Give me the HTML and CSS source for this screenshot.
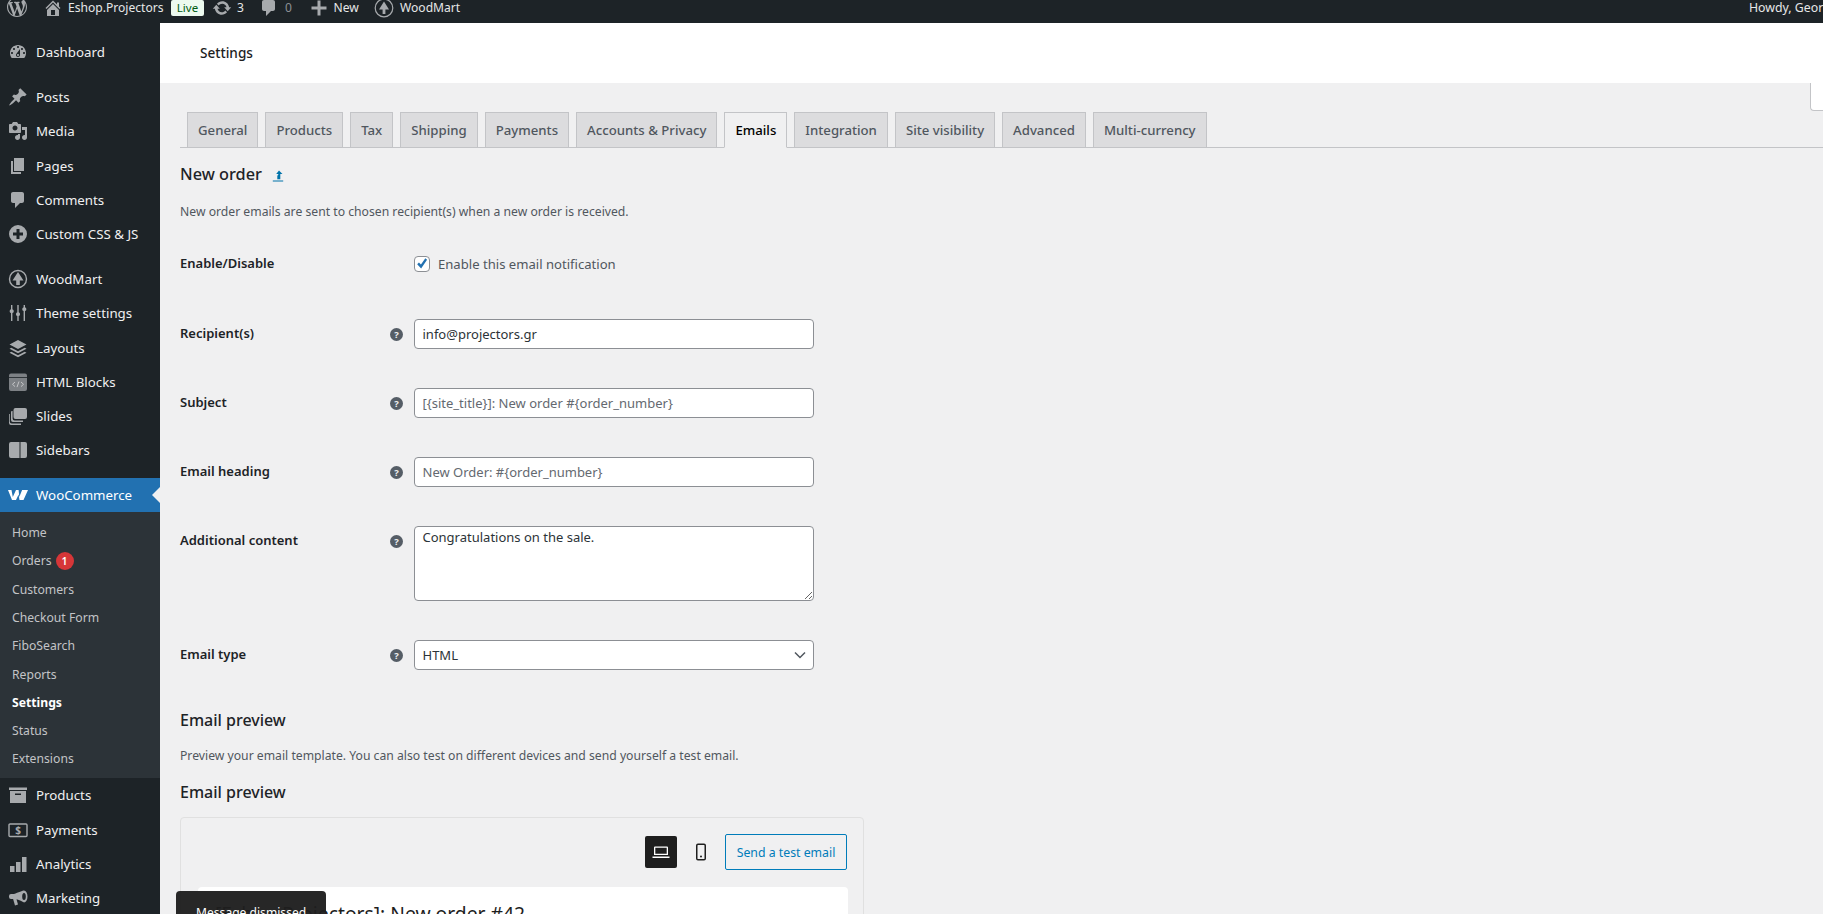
FILE: index.html
```html
<!DOCTYPE html>
<html lang="en">
<head>
<meta charset="utf-8">
<title>Settings</title>
<link rel="stylesheet" href="styles.css">
</head>
<body>
<header class="adminbar">
  <svg class="ab-logo" viewBox="0 0 20 20"><path d="M20 10c0-5.51-4.49-10-10-10C4.48 0 0 4.49 0 10c0 5.52 4.48 10 10 10 5.51 0 10-4.48 10-10zM7.78 15.37L4.37 6.22c.55-.02 1.17-.08 1.17-.08.5-.06.44-1.13-.06-1.11 0 0-1.45.11-2.37.11-.18 0-.37 0-.58-.01C4.12 2.69 6.87 1.11 10 1.11c2.33 0 4.45.87 6.05 2.34-.68-.11-1.65.39-1.65 1.58 0 .74.45 1.36.9 2.1.35.61.55 1.36.55 2.46 0 1.49-1.4 5-1.4 5l-3.03-8.37c.54-.02.82-.17.82-.17.5-.05.44-1.25-.06-1.22 0 0-1.44.12-2.38.12-.87 0-2.33-.12-2.33-.12-.5-.03-.56 1.2-.06 1.22l.92.08 1.26 3.41zM17.41 10c.24-.64.74-1.87.43-4.25.7 1.29 1.05 2.71 1.05 4.25 0 3.29-1.73 6.24-4.4 7.78.97-2.59 1.94-5.2 2.92-7.78zM6.1 18.09C3.12 16.65 1.11 13.53 1.11 10c0-1.3.23-2.48.72-3.59C3.25 10.3 4.67 14.2 6.1 18.09zm4.03-6.63l2.58 6.98c-.86.29-1.76.45-2.71.45-.79 0-1.57-.11-2.29-.33.81-2.38 1.62-4.74 2.42-7.1z"/></svg>
  <svg class="ab-home" viewBox="0 0 20 20"><path d="M16 8.5l1.53 1.53-1.06 1.06L10 4.62l-6.47 6.47-1.06-1.06L10 2.5l4 4v-2h2v4zm-6-2.46l6 5.99V18H4v-5.97zM12 17v-5H8v5h4z"/></svg>
  <span class="ab-text ab-site">Eshop.Projectors</span>
  <span class="ab-live">Live</span>
  <svg class="ab-update" viewBox="0 0 20 20"><path d="M10.2 3.28c3.53 0 6.43 2.61 6.92 6h2.08l-3.5 4-3.5-4h2.32c-.45-1.97-2.21-3.45-4.32-3.45-1.45 0-2.73.71-3.54 1.78L4.95 5.66C6.23 4.2 8.11 3.28 10.2 3.28zm-.4 13.44c-3.52 0-6.43-2.61-6.92-6H.8l3.5-4c1.17 1.33 2.33 2.67 3.5 4H5.48c.45 1.97 2.21 3.45 4.32 3.45 1.45 0 2.73-.71 3.54-1.78l1.71 1.95c-1.28 1.46-3.15 2.38-5.25 2.38z"/></svg>
  <span class="ab-text ab-count">3</span>
  <svg class="ab-comment" viewBox="0 0 20 20"><path d="M5 2h9c1.1 0 2 .9 2 2v7c0 1.1-.9 2-2 2h-2l-5 5v-5H5c-1.1 0-2-.9-2-2V4c0-1.1.9-2 2-2z"/></svg>
  <span class="ab-text ab-zero">0</span>
  <svg class="ab-plus" viewBox="0 0 20 20"><path d="M8.5 2.5h3v6h6v3h-6v6h-3v-6h-6v-3h6z"/></svg>
  <span class="ab-text ab-new">New</span>
  <svg class="ab-wood" viewBox="0 0 20 20"><circle class="ring" cx="10" cy="10" r="8.8"/><path d="M10 3.5l5 8h-3.6V16H8.6V11.5H5z"/></svg>
  <span class="ab-text">WoodMart</span>
  <span class="ab-text ab-howdy">Howdy, George</span>
</header>

<div class="shell">
  <nav class="sidebar">
    <a class="item"><svg class="ico" viewBox="0 0 20 20"><path d="M3.76 16h12.48c1.1-1.37 1.76-3.11 1.76-5 0-4.42-3.58-8-8-8s-8 3.58-8 8c0 1.89.66 3.63 1.76 5zM10 4c.55 0 1 .45 1 1s-.45 1-1 1-1-.45-1-1 .45-1 1-1zM6 6c.55 0 1 .45 1 1s-.45 1-1 1-1-.45-1-1 .45-1 1-1zm8 0c.55 0 1 .45 1 1s-.45 1-1 1-1-.45-1-1 .45-1 1-1zm-5.37 5.55L12 7v6c0 1.1-.9 2-2 2s-2-.9-2-2c0-.57.24-1.08.63-1.45zM4 10c.55 0 1 .45 1 1s-.45 1-1 1-1-.45-1-1 .45-1 1-1zm12 0c.55 0 1 .45 1 1s-.45 1-1 1-1-.45-1-1 .45-1 1-1zm-5 3c0-.55-.45-1-1-1s-1 .45-1 1 .45 1 1 1 1-.45 1-1z"/></svg>Dashboard</a>
    <div class="sep"></div>
    <a class="item"><svg class="ico" viewBox="0 0 20 20"><path d="M10.44 3.02l1.82-1.82 6.36 6.35-1.83 1.82c-1.05-.68-2.48-.57-3.41.36l-.75.75c-.92.93-1.04 2.35-.35 3.41l-1.83 1.82-2.41-2.41-2.8 2.79c-.42.42-3.38 2.71-3.8 2.29s1.86-3.39 2.28-3.81l2.79-2.79L4.1 9.36l1.83-1.82c1.05.69 2.48.57 3.4-.36l.75-.75c.93-.92 1.05-2.35.36-3.41z"/></svg>Posts</a>
    <a class="item"><svg class="ico" viewBox="0 0 20 20"><path d="M13 11V4c0-.55-.45-1-1-1h-1.67L9 1H5L3.67 3H2c-.55 0-1 .45-1 1v7c0 .55.45 1 1 1h10c.55 0 1-.45 1-1zM7 4.5c1.38 0 2.5 1.12 2.5 2.5S8.38 9.5 7 9.5 4.5 8.38 4.5 7 5.62 4.5 7 4.5zM14 6h5v10.5c0 1.38-1.12 2.5-2.5 2.5S14 17.88 14 16.5s1.12-2.5 2.5-2.5c.17 0 .34.02.5.05V9h-3V6zm-4 8.05V13h2v3.5c0 1.38-1.12 2.5-2.5 2.5S7 17.88 7 16.5 8.12 14 9.5 14c.17 0 .34.02.5.05z"/></svg>Media</a>
    <a class="item"><svg class="ico" viewBox="0 0 20 20"><path d="M6 15V2h10v13H6zm-1 1h8v2H3V5h2v11z"/></svg>Pages</a>
    <a class="item"><svg class="ico" viewBox="0 0 20 20"><path d="M5 2h9c1.1 0 2 .9 2 2v7c0 1.1-.9 2-2 2h-2l-5 5v-5H5c-1.1 0-2-.9-2-2V4c0-1.1.9-2 2-2z"/></svg>Comments</a>
    <a class="item"><svg class="ico" viewBox="0 0 20 20"><path fill-rule="evenodd" d="M10 1a9 9 0 1 1 0 18 9 9 0 0 1 0-18zM8.5 5v3.5H5v3h3.500V15h3v-3.5H15v-3h-3.500V5z"/></svg>Custom CSS &amp; JS</a>
    <div class="sep"></div>
    <a class="item"><svg class="ico" viewBox="0 0 20 20"><circle class="ring" cx="10" cy="10" r="8.5"/><path d="M10 3l5.500 8.500h-3.700V16H8.200V11.500H4.500z"/></svg>WoodMart</a>
    <a class="item"><svg class="ico" viewBox="0 0 20 20"><path d="M3 2h1.400v4.300a2 2 0 0 1 0 3.800V18H3V10.100a2 2 0 0 1 0-3.800zM9.300 2h1.400v7.300a2 2 0 0 1 0 3.800V18H9.300v-4.900a2 2 0 0 1 0-3.800zM15.600 2H17v2.300a2 2 0 0 1 0 3.800V18h-1.400V8.100a2 2 0 0 1 0-3.800z"/></svg>Theme settings</a>
    <a class="item"><svg class="ico" viewBox="0 0 20 20"><path d="M10 2l8.500 4.500L10 11 1.500 6.500zM3.300 9.700L10 13.200l6.700-3.500 1.800 1L10 15.200 1.500 10.700zM3.300 13.700L10 17.200l6.700-3.500 1.800 1L10 19.200 1.500 14.700z"/></svg>Layouts</a>
    <a class="item"><svg class="ico" viewBox="0 0 20 20"><path class="fade" d="M3 1.500h14a2 2 0 0 1 2 2V17a2 2 0 0 1-2 2H3a2 2 0 0 1-2-2V3.500a2 2 0 0 1 2-2z"/><path class="rule" d="M1 5.500h18"/><path class="code" d="M7 10l-2.500 2.300L7 14.600M13 10l2.500 2.300L13 14.600M11 9.500l-2 5.600"/></svg>HTML Blocks</a>
    <a class="item"><svg class="ico" viewBox="0 0 20 20"><path d="M7.5 2H17a2 2 0 0 1 2 2v7a2 2 0 0 1-2 2H7.500a2 2 0 0 1-2-2V4a2 2 0 0 1 2-2zM4 5h.6v7.500a2 2 0 0 0 2 2H15V16H5a2 2 0 0 1-2-2V6a1 1 0 0 1 1-1zM1 8h.8v7.500a2 2 0 0 0 2 2H13V19H3a2 2 0 0 1-2-2z"/></svg>Slides</a>
    <a class="item"><svg class="ico" viewBox="0 0 20 20"><path d="M3 2h8.500v16H3a2 2 0 0 1-2-2V4a2 2 0 0 1 2-2zM12.500 2H17a2 2 0 0 1 2 2v12a2 2 0 0 1-2 2h-4.500z"/></svg>Sidebars</a>
    <div class="sep"></div>
    <a class="item current"><svg class="ico woo" viewBox="0 0 20 20"><path d="M0 5h3.500l1.300 7L8 5h2.600l.7 7 2.800-7H20l-4.500 10h-4l-.9-5.500L8 15H4z"/></svg>WooCommerce</a>
    <div class="submenu">
      <a class="sub">Home</a>
      <a class="sub orders">Orders <span class="badge">1</span></a>
      <a class="sub">Customers</a>
      <a class="sub">Checkout Form</a>
      <a class="sub">FiboSearch</a>
      <a class="sub">Reports</a>
      <a class="sub active">Settings</a>
      <a class="sub">Status</a>
      <a class="sub">Extensions</a>
    </div>
    <a class="item"><svg class="ico" viewBox="0 0 20 20"><path d="M1 2.500h18V5H1zM2 6h16v12H2zM7 8.500V10h6V8.500z"/></svg>Products</a>
    <a class="item"><svg class="ico" viewBox="0 0 20 20"><rect class="ring" x="1" y="4" width="18" height="12.500" rx="1"/><text class="dollar" x="10" y="14.300" text-anchor="middle">$</text></svg>Payments</a>
    <a class="item"><svg class="ico" viewBox="0 0 20 20"><path d="M2 12h4.500v6H2zM8 8h4.500v10H8zM14 3h4.500v15H14z"/></svg>Analytics</a>
    <a class="item"><svg class="ico" viewBox="0 0 20 20"><path fill-rule="evenodd" d="M16 2.500a3.500 6 0 0 1 0 12c-.6 0-3-2-7.500-3.200l1.500 5.200-3 1-1.900-6.500H3a2 2 0 0 1-2-2v-1a2 2 0 0 1 2-2h3C10 4.500 15 2.500 16 2.500zM16 5a1.800 3.500 0 1 0 0 7 1.800 3.500 0 0 0 0-7z"/></svg>Marketing</a>
  </nav>

  <main class="main">
    <div class="pagehead">Settings</div>
    <div class="activity"></div>
    <div class="content">
      <div class="tabs">
        <a class="tab">General</a>
        <a class="tab">Products</a>
        <a class="tab">Tax</a>
        <a class="tab">Shipping</a>
        <a class="tab">Payments</a>
        <a class="tab">Accounts &amp; Privacy</a>
        <a class="tab on">Emails</a>
        <a class="tab">Integration</a>
        <a class="tab">Site visibility</a>
        <a class="tab">Advanced</a>
        <a class="tab">Multi-currency</a>
      </div>

      <h2 class="title">New order <svg class="uplink" viewBox="0 0 12 12"><path d="M7 .5L10.500 4H8.300v5.300H5.300V6.500c0-1 .4-1.500 1-1.800V4H4.200zM.8 10.500h10.400v1.100H.8z"/></svg></h2>
      <p class="desc desc-first">New order emails are sent to chosen recipient(s) when a new order is received.</p>

      <div class="row row-first">
        <label class="lbl">Enable/Disable</label>
        <span class="nohelp"></span>
        <label class="check"><span class="box"><svg viewBox="0 0 16 16"><path d="M2.500 8.200l2-2 2.300 2.500L11.800 1.500l2 1.500-6.800 10z"/></svg></span>Enable this email notification</label>
      </div>
      <div class="row">
        <label class="lbl">Recipient(s)</label>
        <svg class="help" viewBox="0 0 13 13"><circle cx="6.500" cy="6.500" r="6.500"/><text x="6.500" y="10" text-anchor="middle">?</text></svg>
        <input class="field" type="text" value="info@projectors.gr">
      </div>
      <div class="row">
        <label class="lbl">Subject</label>
        <svg class="help" viewBox="0 0 13 13"><circle cx="6.500" cy="6.500" r="6.500"/><text x="6.500" y="10" text-anchor="middle">?</text></svg>
        <input class="field" type="text" placeholder="[{site_title}]: New order #{order_number}">
      </div>
      <div class="row">
        <label class="lbl">Email heading</label>
        <svg class="help" viewBox="0 0 13 13"><circle cx="6.500" cy="6.500" r="6.500"/><text x="6.500" y="10" text-anchor="middle">?</text></svg>
        <input class="field" type="text" placeholder="New Order: #{order_number}">
      </div>
      <div class="row">
        <label class="lbl">Additional content</label>
        <svg class="help" viewBox="0 0 13 13"><circle cx="6.500" cy="6.500" r="6.500"/><text x="6.500" y="10" text-anchor="middle">?</text></svg>
        <textarea class="field area">Congratulations on the sale.</textarea>
      </div>
      <div class="row">
        <label class="lbl">Email type</label>
        <svg class="help" viewBox="0 0 13 13"><circle cx="6.500" cy="6.500" r="6.500"/><text x="6.500" y="10" text-anchor="middle">?</text></svg>
        <div class="selectwrap">
          <select class="field picker"><option>HTML</option></select>
          <svg class="chev" viewBox="0 0 12 8"><path d="M1 1.500l5 5 5-5"/></svg>
        </div>
      </div>

      <h3 class="sub-h h-first">Email preview</h3>
      <p class="desc desc-two">Preview your email template. You can also test on different devices and send yourself a test email.</p>
      <h3 class="sub-h h-second">Email preview</h3>

      <section class="preview">
        <div class="toolbar">
          <button class="dev dev-on"><svg viewBox="0 0 24 24"><path d="M6 6.500h12a1 1 0 0 1 1 1V15H5V7.500a1 1 0 0 1 1-1zM6.300 7.800v5.900h11.400V7.800zM3.500 16.500h17V18h-17z"/></svg></button>
          <button class="dev"><svg viewBox="0 0 24 24"><path fill-rule="evenodd" d="M9 3.500h6a2 2 0 0 1 2 2v13a2 2 0 0 1-2 2H9a2 2 0 0 1-2-2v-13a2 2 0 0 1 2-2zM9 5a.5.5 0 0 0-.5.5v13a.5.5 0 0 0 .5.5h6a.5.5 0 0 0 .5-.5v-13A.5.5 0 0 0 15 5zM12 15.500a1 1 0 1 1 0 2 1 1 0 0 1 0-2z"/></svg></button>
          <button class="send">Send a test email</button>
        </div>
        <div class="mail">[Eshop.Projectors]: New order #42</div>
      </section>
    </div>
  </main>
</div>

<div class="toast">Message dismissed</div>
</body>
</html>
```

FILE: styles.css
```css
* { box-sizing: border-box; }
html, body { margin: 0; height: 914px; overflow: hidden; }
body {
  background: #f0f0f1;
  color: #3c434a;
  font-family: "Noto Sans", "Open Sans", sans-serif;
  font-size: 13px;
  position: relative;
}
svg { display: block; flex: none; }

/* admin bar */
.adminbar {
  height: 23px;
  background: #1d2327;
  color: #f0f0f1;
  display: flex;
  align-items: flex-start;
  overflow: hidden;
  font-size: 12.100px;
  padding-left: 7px;
}
.adminbar svg { fill: #a7aaad; }
.ab-text { line-height: 15px; height: 16px; white-space: nowrap; color: #e6e7e8; }
.ab-logo { width: 20px; height: 20px; margin-top: -3px; }
.ab-home { width: 20px; height: 20px; margin: -2px 0 0 16px; }
.ab-site { margin-left: 5px; width: 95px; }
.ab-live { width: 33px; height: 16px; line-height: 16px; background: #edfaef; color: #005c12; font-size: 11.500px; text-align: center; margin-left: 8px; border-radius: 2px; }
.ab-update { width: 20px; height: 20px; margin: -2px 0 0 8px; }
.ab-count { margin-left: 5px; width: 7px; }
.ab-comment { width: 20px; height: 20px; margin: -2px 0 0 15px; }
.ab-zero { margin-left: 6px; width: 7px; color: #8c8f94; }
.ab-plus { width: 20px; height: 20px; margin: -2px 0 0 16.500px; }
.ab-new { margin-left: 5px; width: 25.500px; }
.ab-wood { width: 20px; height: 20px; margin: -2px 0 0 15px; }
.ab-wood + .ab-text { margin-left: 6px; }
.ab-wood .ring { fill: none; stroke: #a7aaad; stroke-width: 1.200; }
.ab-howdy { margin-left: auto; width: 74px; overflow: hidden; font-size: 12.300px; }

/* layout */
.shell { display: flex; height: 891px; }
.sidebar {
  width: 160px;
  flex: none;
  background: #1d2327;
  padding-top: 12px;
  overflow: hidden;
  font-size: 13.300px;
}
.sep { height: 11px; }
.sep:nth-of-type(n) { flex: none; }
.item {
  display: flex;
  align-items: center;
  height: 34.200px;
  padding-left: 8px;
  color: #f0f0f1;
  white-space: nowrap;
  position: relative;
}
.ico { width: 20px; height: 20px; margin-right: 8px; fill: #a7aaad; }
.ico .ring { fill: none; stroke: #a7aaad; stroke-width: 1.400; }
.ico .fade { fill: #7d8185; }
.ico .rule { fill: none; stroke: #1d2327; stroke-width: .8; }
.ico .code { fill: none; stroke: #d5d6d8; stroke-width: .8; }
.ico .dollar { font-family: "Noto Sans", sans-serif; font-size: 10px; font-weight: 700; fill: #a7aaad; }
.current { background: #2271b1; color: #fff; height: 34px; }
.current::after {
  content: "";
  position: absolute;
  right: 0;
  top: 9px;
  border: 8px solid transparent;
  border-right-color: #f0f0f1;
  border-left-width: 0;
}
.woo { fill: #fff; }
.submenu { background: #2c3338; padding: 6px 0 0; height: 266px; }
.sub {
  display: flex;
  align-items: center;
  height: 28.200px;
  padding-left: 12px;
  font-size: 12.200px;
  color: #c3c4c7;
  white-space: nowrap;
}
.sub.active { color: #fff; font-weight: 700; }
.orders { height: 29px; gap: 1px; }
.badge {
  width: 18px;
  height: 18px;
  border-radius: 50%;
  background: #d63638;
  color: #fff;
  font-size: 10.500px;
  font-weight: 600;
  line-height: 18px;
  text-align: center;
  margin-left: 3px;
}

/* main */
.main { flex: 1; min-width: 0; position: relative; }
.pagehead {
  height: 60px;
  background: #fff;
  padding: 20px 0 0 40px;
  font-size: 13.600px;
  line-height: 19px;
  font-weight: 500;
  color: #1e1e1e;
}
.activity {
  position: absolute;
  right: 0;
  top: 60px;
  width: 13px;
  height: 28px;
  background: #fff;
  border: 1px solid #c3c4c7;
  border-top: 0;
  border-right: 0;
  border-radius: 0 0 0 4px;
}
.content { padding-left: 20px; }

.tabs {
  margin-top: 29px;
  height: 36px;
  display: flex;
  gap: 7px;
  padding-left: 7px;
  border-bottom: 1px solid #c3c4c7;
}
.tab {
  height: 36px;
  padding: 0 10px;
  line-height: 34px;
  background: #dcdcde;
  border: 1px solid #c3c4c7;
  color: #50575e;
  font-size: 13.200px;
  font-weight: 500;
  white-space: nowrap;
}
.tab.on { background: #f0f0f1; border-bottom-color: #f0f0f1; color: #000; }

.title {
  margin: 14px 0 0;
  font-size: 16.300px;
  line-height: 24px;
  font-weight: 500;
  color: #1d2327;
  display: flex;
  align-items: center;
  gap: 10px;
}
.uplink { width: 12px; height: 12px; fill: #0073aa; margin-top: 3px; }
.desc { margin: 0; font-size: 12.200px; line-height: 18px; color: #50575e; }
.desc-first { margin-top: 17px; }

.row { display: flex; align-items: flex-start; margin-top: 39px; width: 634px; }
.row-first { margin-top: 28px; height: 30px; }
.row-first + .row { margin-top: 40px; }
.lbl { width: 209.500px; flex: none; line-height: 28px; font-weight: 600; font-size: 13px; color: #1d2327; }
.nohelp { width: 24.500px; flex: none; }
.help { width: 13px; height: 13px; margin: 9px 11px 0 0; fill: #555d66; }
.help text { font-family: "Noto Sans", sans-serif; font-size: 9.500px; font-weight: 700; fill: #f0f0f1; }
.check { display: flex; align-items: center; height: 30px; font-size: 13.100px; color: #50575e; gap: 8px; }
.box { width: 16px; height: 16px; background: #fff; border: 1px solid #8c8f94; border-radius: 4px; }
.box svg { width: 14px; height: 14px; fill: #2271b1; }
.field {
  display: block;
  width: 400px;
  height: 30px;
  border: 1px solid #8c8f94;
  border-radius: 4px;
  background: #fff;
  padding: 0 8px;
  font: 13px "Noto Sans", "Open Sans", sans-serif;
  color: #2c3338;
  outline: 0;
}
.field::placeholder { color: #646970; opacity: 1; }
.area { height: 75px; padding: 0 8px; line-height: 20px; }
.selectwrap { position: relative; width: 400px; }
.picker { appearance: none; }
.chev { position: absolute; right: 8px; top: 11px; width: 12px; height: 8px; fill: none; stroke: #50575e; stroke-width: 1.500; }

.sub-h { margin: 0; font-size: 16px; line-height: 24px; font-weight: 500; color: #1d2327; }
.h-first { margin-top: 38px; }
.desc-two { margin-top: 15px; }
.h-second { margin-top: 15px; }

.preview {
  margin-top: 13px;
  width: 684px;
  height: 200px;
  border: 1px solid #e0e0e0;
  border-radius: 4px;
  padding: 16px 15px 0 17px;
}
.toolbar { display: flex; justify-content: flex-end; align-items: center; gap: 8px; height: 36px; padding-right: 1px; }
.dev { width: 32px; height: 32px; border: 0; padding: 4px; background: transparent; border-radius: 2px; }
.dev svg { width: 24px; height: 24px; fill: #1e1e1e; }
.dev-on { background: #1e1e1e; }
.dev-on svg { fill: #fff; }
.send {
  width: 122px;
  height: 36px;
  background: transparent;
  border: 1px solid #007cba;
  border-radius: 2px;
  color: #007cba;
  font: 12.300px "Noto Sans", "Open Sans", sans-serif;
  padding: 0;
}
.mail {
  margin-top: 17px;
  height: 120px;
  background: #fff;
  border-radius: 4px;
  padding: 13px 0 0 17px;
  font-size: 19.300px;
  line-height: 28px;
  color: #1e1e1e;
}

/* snackbar overlay */
.toast {
  position: absolute;
  left: 176px;
  top: 891px;
  width: 150px;
  height: 40px;
  background: rgba(30, 30, 30, .96);
  color: #fff;
  border-radius: 4px;
  padding: 13px 0 0 20px;
  font-size: 12.100px;
  line-height: 18px;
  white-space: nowrap;
}
```
